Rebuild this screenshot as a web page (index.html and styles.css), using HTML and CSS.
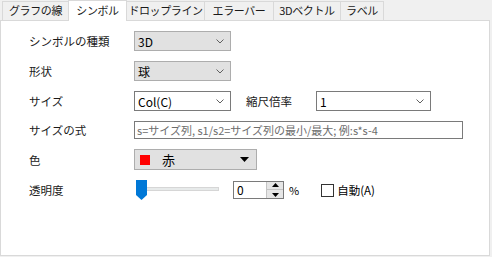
FILE: index.html
```html
<!DOCTYPE html>
<html lang="ja">
<head>
    <meta charset="UTF-8">
    <title>シンボル</title>
    <link rel="stylesheet" href="styles.css">
</head>
<body>

    <!-- Tab strip -->
    <div class="tabs">
        <div class="tab tab-line">グラフの線</div>
        <div class="tab tab-symbol active">シンボル</div>
        <div class="tab tab-drop">ドロップライン</div>
        <div class="tab tab-error">エラーバー</div>
        <div class="tab tab-vector">3Dベクトル</div>
        <div class="tab tab-label">ラベル</div>
    </div>

    <!-- Symbol page -->
    <div class="panel">
        <div class="form">
            <div class="row row-kind">
                <span class="label">シンボルの種類</span>
                <div class="combo combo-short">
                    <span>3D</span>
                    <svg class="chev" width="8" height="5" viewBox="0 0 8 5"><polyline points="0.5,0.5 4,4 7.5,0.5"/></svg>
                </div>
            </div>

            <div class="row row-shape">
                <span class="label">形状</span>
                <div class="combo combo-short">
                    <span>球</span>
                    <svg class="chev" width="8" height="5" viewBox="0 0 8 5"><polyline points="0.5,0.5 4,4 7.5,0.5"/></svg>
                </div>
            </div>

            <div class="row row-size">
                <span class="label">サイズ</span>
                <div class="combo combo-short combo-edit">
                    <span>Col(C)</span>
                    <svg class="chev" width="8" height="5" viewBox="0 0 8 5"><polyline points="0.5,0.5 4,4 7.5,0.5"/></svg>
                </div>
                <span class="label label-scale">縮尺倍率</span>
                <div class="combo combo-scale combo-edit">
                    <span>1</span>
                    <svg class="chev" width="8" height="5" viewBox="0 0 8 5"><polyline points="0.5,0.5 4,4 7.5,0.5"/></svg>
                </div>
            </div>

            <div class="row row-formula">
                <span class="label">サイズの式</span>
                <div class="textbox">s=サイズ列, s1/s2=サイズ列の最小/最大; 例:s*s-4</div>
            </div>

            <div class="row row-color">
                <span class="label">色</span>
                <div class="combo combo-color">
                    <span class="swatch"></span>
                    <span class="color-name">赤</span>
                    <svg class="tri" width="9" height="5" viewBox="0 0 9 5"><polygon points="0,0 9,0 4.5,5"/></svg>
                </div>
            </div>

            <div class="row row-alpha">
                <span class="label">透明度</span>
                <div class="slider">
                    <div class="track"></div>
                    <svg class="thumb" width="11" height="20" viewBox="0 0 11 20"><polygon points="0,0 11,0 11,15 5.5,20 0,15"/></svg>
                </div>
                <div class="spin">
                    <span class="spin-value">0</span>
                    <div class="spin-btns">
                        <svg width="7" height="4" viewBox="0 0 7 4"><polygon points="3.5,0 7,4 0,4"/></svg>
                        <span class="spin-sep"></span>
                        <svg width="7" height="4" viewBox="0 0 7 4"><polygon points="0,0 7,0 3.5,4"/></svg>
                    </div>
                </div>
                <span class="unit">%</span>
                <label class="check">
                    <span class="box"></span>
                    <span>自動(A)</span>
                </label>
            </div>
        </div>
    </div>

</body>
</html>
```

FILE: styles.css
```css
/* Global */
body {
    margin: 0;
    width: 492px;
    height: 257px;
    background-color: #f0f0f0;
    font-family: "Noto Sans CJK JP", "Noto Sans", sans-serif;
    font-size: 12px;
    color: #000;
    overflow: hidden;
}

/* Tabs */
.tabs {
    display: flex;
    align-items: flex-end;
    height: 20px;
    padding-left: 2px;
    position: relative;
    z-index: 1;
}

.tab {
    box-sizing: border-box;
    height: 19px;
    border: 1px solid #d9d9d9;
    border-bottom: none;
    margin-left: -1px;
    background-color: #f0f0f0;
    font-size: 11px;
    line-height: 17px;
    letter-spacing: -0.4px;
    text-align: center;
    white-space: nowrap;
    color: #1a1a1a;
}

.tab:first-child {
    margin-left: 0;
}

.tab.active {
    height: 21px;
    margin-bottom: -1px;
    background-color: #fff;
    line-height: 19px;
}

.tab-line { width: 67px; }
.tab-symbol { width: 59px; }
.tab-drop { width: 79px; }
.tab-error { width: 70px; }
.tab-vector { width: 68px; }
.tab-label { width: 44px; }

/* Page */
.panel {
    box-sizing: border-box;
    width: 490px;
    height: 236px;
    background-color: #fff;
    border: 1px solid #d9d9d9;
}

.form {
    display: flex;
    flex-direction: column;
    gap: 10px;
    padding: 10px 0 0 28px;
}

.row {
    display: flex;
    align-items: center;
    height: 20px;
}

.row-formula { height: 18px; }
.row-color { height: 21px; }

.label {
    width: 105px;
    flex-shrink: 0;
    white-space: nowrap;
    font-size: 11.5px;
    color: #1a1a1a;
}

/* Combo boxes */
.combo {
    box-sizing: border-box;
    display: flex;
    align-items: center;
    justify-content: space-between;
    height: 20px;
    padding: 0 6px 0 3px;
    border: 1px solid #adadad;
    background-color: #e1e1e1;
    font-size: 12px;
}

.combo-short { width: 97px; }

.combo-edit {
    border-color: #7a7a7a;
    background-color: #fff;
}

.combo-scale { width: 115px; }

.label-scale {
    width: 70px;
    margin-left: 15px;
}

.chev {
    fill: none;
    stroke: #606060;
    stroke-width: 1;
}

/* Formula box */
.textbox {
    box-sizing: border-box;
    width: 329px;
    height: 18px;
    padding-left: 2px;
    border: 1px solid #7a7a7a;
    color: #6d6d6d;
    font-size: 11px;
    line-height: 16px;
    white-space: nowrap;
    overflow: hidden;
}

/* Colour picker */
.combo-color {
    width: 123px;
    height: 21px;
    padding: 0 7px 0 5px;
    justify-content: flex-start;
}

.swatch {
    width: 10px;
    height: 10px;
    background-color: #ff0000;
}

.color-name {
    margin-left: 12px;
    font-size: 13px;
}

.tri {
    margin-left: auto;
    fill: #000;
}

/* Transparency slider */
.slider {
    position: relative;
    width: 85px;
    height: 20px;
}

.track {
    position: absolute;
    left: 2px;
    right: 0;
    top: 7px;
    height: 4px;
    box-sizing: border-box;
    background-color: #e7eaea;
    border: 1px solid #d6d6d6;
}

.thumb {
    position: absolute;
    left: 2px;
    top: 0;
    fill: #0078d7;
}

.spin {
    box-sizing: border-box;
    display: flex;
    width: 51px;
    height: 18px;
    margin-left: 14px;
    border: 1px solid #7a7a7a;
}

.spin-value {
    flex: 1;
    padding-left: 3px;
    font-size: 12px;
    line-height: 16px;
}

.spin-btns {
    display: flex;
    flex-direction: column;
    align-items: center;
    justify-content: space-around;
    width: 16px;
    background-color: #e6e6e6;
    border-left: 1px solid #c4c4c4;
}

.spin-btns svg {
    fill: #000;
}

.spin-sep {
    width: 100%;
    height: 1px;
    background-color: #c4c4c4;
}

.unit {
    margin-left: 5px;
    font-size: 11px;
}

.check {
    display: flex;
    align-items: center;
    margin-left: 22px;
    font-size: 11.5px;
}

.check .box {
    box-sizing: border-box;
    width: 13px;
    height: 13px;
    margin-right: 3px;
    border: 1px solid #333;
    background-color: #fff;
}
```
